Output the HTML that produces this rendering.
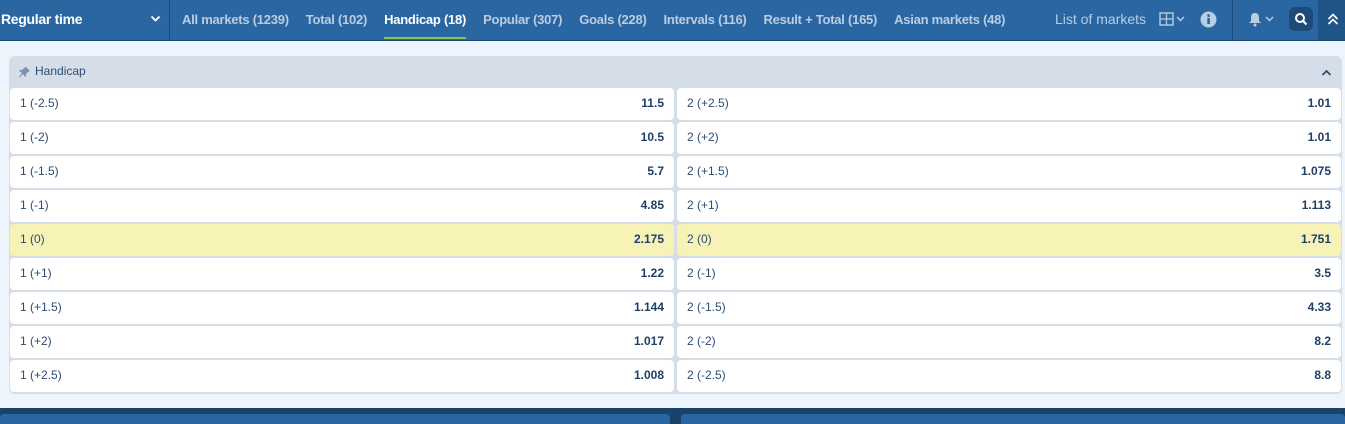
<!DOCTYPE html>
<html><head><style>
*{margin:0;padding:0;box-sizing:border-box}
body{width:1345px;height:424px;overflow:hidden;background:#eef4fb;font-family:"Liberation Sans",sans-serif;position:relative}
.top{position:absolute;left:0;top:0;width:1345px;height:41px;background:#2a67a2;border-bottom:1px solid #1b4a78}
.sel{position:absolute;left:0;top:0;width:170px;height:40px;border-right:1px solid #1b4a78;color:#fff;font-size:14px;font-weight:bold;line-height:38px;padding-left:1px;letter-spacing:-0.3px}
.tabs{position:absolute;left:182px;top:0;height:40px;display:flex;gap:0}
.tab{color:#b9cde3;font-size:13px;font-weight:bold;line-height:40px;margin-right:17px;position:relative;white-space:nowrap;letter-spacing:-0.25px}
.tab.a{color:#fff}
.tab.a:after{content:"";position:absolute;left:0;right:0;bottom:1px;height:2px;background:#8bc34a}
.lm{position:absolute;left:1055px;top:0;line-height:38px;color:#b9cde3;font-size:14px}
.panel{position:absolute;left:9px;top:56px;width:1333px;height:338px;background:#d5dee8;border-radius:6px}
.ph{height:31px;line-height:31px;color:#2d4d72;font-size:12px;padding-left:26px;position:relative}
.row{position:absolute;height:32px;background:#fff;border-radius:4px;font-size:12px;color:#2d4d72;line-height:30px;padding:0 10px}
.row b{position:absolute;right:10px;top:0;color:#1f3f66}
.hl{background:#f7f3b7}
.bot{position:absolute;left:0;top:408px;width:1345px;height:16px;background:#1b4268}
.bb{position:absolute;top:414px;height:10px;background:#2a67a2;border-radius:4px 4px 0 0}
</style></head><body>
<div class="top">
<div class="sel">Regular time<svg style="position:absolute;left:150px;top:15px" width="11" height="8" viewBox="0 0 11 8"><path d="M1.5 1.5l4 4 4-4" stroke="#fff" stroke-width="1.8" fill="none"/></svg></div>
<div class="tabs">
<span class="tab">All markets (1239)</span><span class="tab">Total (102)</span><span class="tab a">Handicap (18)</span><span class="tab">Popular (307)</span><span class="tab">Goals (228)</span><span class="tab">Intervals (116)</span><span class="tab">Result + Total (165)</span><span class="tab">Asian markets (48)</span>
</div>
<div class="lm">List of markets</div>
<svg style="position:absolute;left:1159px;top:12px" width="32" height="15" viewBox="0 0 32 15"><rect x="1" y="1" width="13" height="12" fill="none" stroke="#b9cde3" stroke-width="1.4"/><path d="M7.5 1v12M1 7h13" stroke="#b9cde3" stroke-width="1.2"/><path d="M18 5l3.5 3.5 3.5-3.5" stroke="#b9cde3" stroke-width="1.5" fill="none"/></svg>
<svg style="position:absolute;left:1200px;top:11px" width="17" height="17"><circle cx="8.5" cy="8.5" r="8" fill="#b9cde3"/><rect x="7.3" y="7" width="2.6" height="6" fill="#2a67a2"/><circle cx="8.6" cy="4.6" r="1.4" fill="#2a67a2"/></svg>
<div style="position:absolute;left:1232px;top:0;width:1px;height:40px;background:#1b4a78"></div>
<svg style="position:absolute;left:1248px;top:12px" width="32" height="15" viewBox="0 0 32 15"><path d="M7 1c-3 0-4 2-4 5v3l-2 2h12l-2-2V6c0-3-1-5-4-5z" fill="#b9cde3"/><circle cx="7" cy="13" r="1.5" fill="#b9cde3"/><path d="M18 5l3.5 3.5 3.5-3.5" stroke="#b9cde3" stroke-width="1.5" fill="none"/></svg>
<div style="position:absolute;left:1289px;top:7px;width:24px;height:24px;border-radius:6px;background:#1d4a78"></div>
<svg style="position:absolute;left:1294px;top:12px" width="14" height="14"><circle cx="6" cy="6" r="4" stroke="#fff" stroke-width="2" fill="none"/><path d="M9 9l3.5 3.5" stroke="#fff" stroke-width="2.2"/></svg>
<div style="position:absolute;left:1318px;top:0;width:27px;height:40px;background:#1f5486"></div>
<svg style="position:absolute;left:1327px;top:13px" width="12" height="14"><path d="M1.5 6l4.5-4.5 4.5 4.5M1.5 11l4.5-4.5 4.5 4.5" stroke="#fff" stroke-width="1.6" fill="none"/></svg>
</div>
<div class="panel">
<div class="ph"><svg style="position:absolute;left:9px;top:10px" width="13" height="13" viewBox="0 0 13 13"><path d="M8 1l4 4-2 1-2 2 0 2-1 1-2-3-4 4 0-1 3-4-3-2 1-1 2 0 2-2z" fill="#7d93ad"/></svg>Handicap<svg style="position:absolute;right:10px;top:13px" width="11" height="8"><path d="M1.5 6l4-4 4 4" stroke="#2d4d72" stroke-width="1.8" fill="none"/></svg></div>
</div>
<div id="rows"></div>
<div class="bot"></div>
<div class="bb" style="left:0;width:670px"></div>
<div class="bb" style="left:681px;width:664px"></div>
<script>
var d=[["1 (-2.5)","11.5","2 (+2.5)","1.01"],["1 (-2)","10.5","2 (+2)","1.01"],["1 (-1.5)","5.7","2 (+1.5)","1.075"],["1 (-1)","4.85","2 (+1)","1.113"],["1 (0)","2.175","2 (0)","1.751"],["1 (+1)","1.22","2 (-1)","3.5"],["1 (+1.5)","1.144","2 (-1.5)","4.33"],["1 (+2)","1.017","2 (-2)","8.2"],["1 (+2.5)","1.008","2 (-2.5)","8.8"]];
var h="";d.forEach(function(r,i){var t=88+34*i,c=i==4?" hl":"";
h+='<div class="row'+c+'" style="left:10px;top:'+t+'px;width:664px">'+r[0]+'<b>'+r[1]+'</b></div>';
h+='<div class="row'+c+'" style="left:677px;top:'+t+'px;width:664px">'+r[2]+'<b>'+r[3]+'</b></div>';});
document.getElementById("rows").innerHTML=h;
</script>
</body></html>
